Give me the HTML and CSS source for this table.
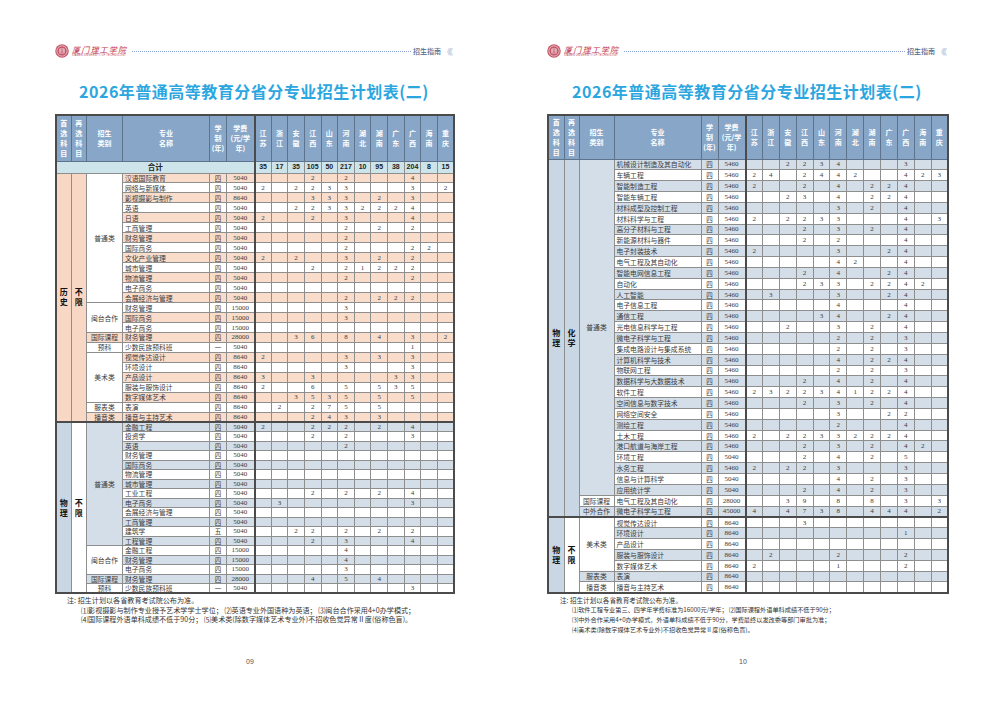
FILE: index.html
```html
<!DOCTYPE html>
<html lang="zh-CN">
<head>
<meta charset="utf-8">
<title>2026年普通高等教育分省分专业招生计划表(二)</title>
<link rel="stylesheet" href="styles.css">
</head>
<body>
<div class="spread">
  <section class="page page-l">
    <div class="inner inner-l">
      <header class="top">
        <div class="logo">
          <svg class="seal" width="14" height="14" viewBox="0 0 30 30"><circle cx="15" cy="15" r="14.5" fill="#c45a6c"/><circle cx="15" cy="15" r="11" fill="none" stroke="#fbe9ec" stroke-width="1.3"/><rect x="9.5" y="9.5" width="11" height="11" rx="1" fill="#f6dde1"/><path d="M11 12.5h8M11 15.5h8M11 18.5h8M15 10.5v9" stroke="#b8475b" stroke-width="1.2"/></svg>
          <div class="brand"><span class="brand-cn">厦门理工学院</span><span class="brand-en">XIAMEN UNIVERSITY OF TECHNOLOGY</span></div>
        </div>
        <div class="dots"></div>
        <span class="guide">招生指南</span><span class="chev">《《</span>
      </header>
      <h1 class="title">2026年普通高等教育分省分专业招生计划表(二)</h1>
      <table class="plan plan-l" id="tl">
        <colgroup><col style="width:15px"><col style="width:15.5px"><col style="width:36px"><col style="width:87px"><col style="width:17px"><col style="width:28px"><col span="12" style="width:16.625px"></colgroup>
        <thead>
          <tr class="hd">
            <th>首<br>选<br>科<br>目</th><th>再<br>选<br>科<br>目</th><th>招生<br>类别</th><th>专业<br>名称</th><th>学<br>制<br>(年)</th><th class="fee">学费<br>(元/学<br>年)</th>
            <th>江<br>苏</th><th>浙<br>江</th><th>安<br>徽</th><th>江<br>西</th><th>山<br>东</th><th>河<br>南</th><th>湖<br>北</th><th>湖<br>南</th><th>广<br>东</th><th>广<br>西</th><th>海<br>南</th><th>重<br>庆</th>
          </tr>
        </thead>
        <tbody>
          <tr class="sum"><td colspan="6" class="fee">合计</td><td>35</td><td>17</td><td>35</td><td>105</td><td>50</td><td>217</td><td>10</td><td>95</td><td>38</td><td>204</td><td>8</td><td>15</td></tr>
        </tbody>
      </table>
      <div class="notes notes-l">
        <p class="lead">注: 招生计划以各省教育考试院公布为准。</p>
        <p>⑴影视摄影与制作专业授予艺术学学士学位； ⑵英语专业外国语种为英语； ⑶闽台合作采用4+0办学模式；</p>
        <p>⑷国际课程外语单科成绩不低于90分； ⑸美术类(除数字媒体艺术专业外)不招收色觉异常Ⅱ度(俗称色盲)。</p>
      </div>
      <div class="pno">09</div>
    </div>
  </section>
  <section class="page page-r">
    <div class="inner inner-r">
      <header class="top">
        <div class="logo">
          <svg class="seal" width="14" height="14" viewBox="0 0 30 30"><circle cx="15" cy="15" r="14.5" fill="#c45a6c"/><circle cx="15" cy="15" r="11" fill="none" stroke="#fbe9ec" stroke-width="1.3"/><rect x="9.5" y="9.5" width="11" height="11" rx="1" fill="#f6dde1"/><path d="M11 12.5h8M11 15.5h8M11 18.5h8M15 10.5v9" stroke="#b8475b" stroke-width="1.2"/></svg>
          <div class="brand"><span class="brand-cn">厦门理工学院</span><span class="brand-en">XIAMEN UNIVERSITY OF TECHNOLOGY</span></div>
        </div>
        <div class="dots"></div>
        <span class="guide">招生指南</span><span class="chev">《《</span>
      </header>
      <h1 class="title">2026年普通高等教育分省分专业招生计划表(二)</h1>
      <table class="plan plan-r" id="tr">
        <colgroup><col style="width:16px"><col style="width:15px"><col style="width:35px"><col style="width:87px"><col style="width:17px"><col style="width:27.5px"><col span="12" style="width:16.875px"></colgroup>
        <thead>
          <tr class="hd">
            <th>首<br>选<br>科<br>目</th><th>再<br>选<br>科<br>目</th><th>招生<br>类别</th><th>专业<br>名称</th><th>学<br>制<br>(年)</th><th class="fee">学费<br>(元/学<br>年)</th>
            <th>江<br>苏</th><th>浙<br>江</th><th>安<br>徽</th><th>江<br>西</th><th>山<br>东</th><th>河<br>南</th><th>湖<br>北</th><th>湖<br>南</th><th>广<br>东</th><th>广<br>西</th><th>海<br>南</th><th>重<br>庆</th>
          </tr>
        </thead>
        <tbody></tbody>
      </table>
      <div class="notes notes-r">
        <p class="lead">注: 招生计划以各省教育考试院公布为准。</p>
        <p>⑴软件工程专业第三、四学年学费标准为16000元/学年； ⑵国际课程外语单科成绩不低于90分；</p>
        <p>⑶中外合作采用4+0办学模式，外语单科成绩不低于90分，学费最终以发改委等部门审批为准；</p>
        <p>⑷美术类(除数字媒体艺术专业外)不招收色觉异常Ⅱ度(俗称色盲)。</p>
      </div>
      <div class="pno">10</div>
    </div>
  </section>
</div>
<script src="app.js"></script>
</body>
</html>
```

FILE: styles.css
```css
* { box-sizing: border-box; }
html, body { margin: 0; padding: 0; background: #ffffff; }
body { font-family: "Noto Sans CJK SC", "Noto Sans", sans-serif; color: #333; }

.spread { display: flex; width: 1000px; height: 710px; overflow: hidden; }
.page { width: 500px; height: 710px; display: flex; }
.page-l { padding-left: 55px; }
.page-r { padding-left: 47px; }
.inner { display: flex; flex-direction: column; height: 710px; padding-top: 42px; }
.inner-l { width: 398px; }
.inner-r { width: 400px; }

/* header strip */
.top { display: flex; align-items: center; height: 18px; }
.logo { display: flex; align-items: center; gap: 3px; }
.seal { display: block; }
.brand { display: flex; flex-direction: column; align-items: flex-start; }
.brand-cn { font-size: 8px; line-height: 9px; color: #c0384f; letter-spacing: 1.2px; font-style: italic; font-weight: 400; }
.brand-en { font-size: 2.6px; line-height: 3px; color: #b83a51; letter-spacing: 0.15px; font-family: "Liberation Sans", sans-serif; }
.dots { flex: 1; border-top: 1px dotted #8ea8d8; margin: 1px 2px 0 5px; }
.guide { font-size: 7px; color: #556789; font-weight: 500; }
.chev { font-size: 8px; color: #a3b3d3; letter-spacing: -2px; margin-left: 2px; margin-right: 2px; }

.title { margin: 21px 0 0; text-align: center; font-size: 16px; line-height: 20px; color: #2ca6df; font-weight: 700; letter-spacing: 0.5px; }

/* table */
.plan { margin-top: 13px; border-collapse: collapse; table-layout: fixed; border: 2px solid #4b4b4b; font-family: "Liberation Serif", "Noto Sans CJK SC", serif; font-size: 7px; color: #3a3a3a; }
.plan-l { width: 398px; }
.plan-r { width: 400px; }
.plan th { background: #88a7c8; color: #fff; font-family: "Noto Sans CJK SC", sans-serif; font-weight: 700; font-size: 7px; line-height: 10px; border: 1px solid #5d738c; padding: 0; text-align: center; vertical-align: middle; }
.plan-l .hd { height: 46px; }
.plan-r .hd { height: 44px; }
.plan td { border: 1px solid #8e8e8e; padding: 0; text-align: center; vertical-align: middle; line-height: 8px; white-space: nowrap; overflow: hidden; }
.plan .fee { border-right: 2px solid #4b4b4b; }
.plan .nm { text-align: left; padding-left: 2px; font-family: "Noto Sans CJK SC", sans-serif; font-size: 6.8px; }
.plan .yr { font-family: "Noto Sans CJK SC", sans-serif; font-size: 6.5px; }
.plan .cat { font-family: "Noto Sans CJK SC", sans-serif; font-size: 6.8px; }

.sum { height: 12px; background: #cde5ea; font-weight: 700; font-family: "Liberation Sans", sans-serif; }
.sum td { font-size: 7px; color: #222; }
.sum .fee { font-family: "Noto Sans CJK SC", sans-serif; font-size: 7.5px; }

.plan-l tr.p { height: 9.97px; }
.plan-l tr.b { height: 9.5px; }
.plan-r tr.b { height: 10.85px; }

tr.p.on { background: #fadccb; }
tr.b.on { background: #d3dee9; }
tr.first td { border-top: 2px solid #4b4b4b; }

.plan td.subj { white-space: normal; font-family: "Noto Sans CJK SC", sans-serif; font-weight: 700; font-size: 8px; line-height: 10px; color: #111; }
.subj .ch { display: block; }
.sp { background: #f8d8c5; }
.sb { background: #c9d6e4; }
.sw { background: #ffffff; }
.cw { background: #ffffff; }
.cb { background: #d3dee9; }

/* notes */
.notes { margin-top: 2px; line-height: 9.6px; color: #333; }
.notes p { margin: 0; white-space: nowrap; }
.notes-l { font-size: 7.1px; }
.notes-l p { padding-left: 26px; }
.notes-l .lead { padding-left: 12px; }
.notes-r { font-size: 6.2px; }
.notes-r p { padding-left: 25px; }
.notes-r .lead { padding-left: 13px; font-size: 6.6px; }

.pno { margin-top: auto; padding-bottom: 45px; text-align: center; font-size: 7px; color: #555; font-family: "Liberation Sans", sans-serif; padding-right: 8px; }
```

FILE: app.js
```js
(function () {
  var LEFT = [
    { c: 'p', s1: '历史', s2: '不限', k1: 'sp', k2: 'sp', start: 0, groups: [
      ['普通类', 'cw', [
        '汉语国际教育|四|5040|,,,2,,2,,,,4,,',
        '网络与新媒体|四|5040|2,,2,2,3,3,,,,3,,2',
        '影视摄影与制作|四|8640|,,,3,3,3,,2,,3,,',
        '英语|四|5040|,,2,2,3,3,2,2,2,4,,',
        '日语|四|5040|2,,,2,,3,,,,4,,',
        '工商管理|四|5040|,,,,,2,,2,,2,,',
        '财务管理|四|5040|,,,,,2,,,,,,',
        '国际商务|四|5040|,,,,,2,,,,2,2,',
        '文化产业管理|四|5040|2,,2,,,3,,2,,2,,',
        '城市管理|四|5040|,,,2,,2,1,2,2,2,,',
        '物流管理|四|5040|,,,,,2,,,,2,,',
        '电子商务|四|5040|,,,,,,,,,,,',
        '会展经济与管理|四|5040|,,,,,2,,2,2,2,,'
      ]],
      ['闽台合作', 'cw', [
        '财务管理|四|15000|,,,,,3,,,,,,',
        '国际商务|四|15000|,,,,,3,,,,,,',
        '电子商务|四|15000|,,,,,,,,,,,'
      ]],
      ['国际课程', '', ['财务管理|四|28000|,,3,6,,8,,4,,3,,2']],
      ['预科', '', ['少数民族预科班|一|5040|,,,,,,,,,1,,']],
      ['美术类', 'cw', [
        '视觉传达设计|四|8640|2,,,,,3,,3,,3,,',
        '环境设计|四|8640|,,,,,3,,,,3,,',
        '产品设计|四|8640|3,,,3,,,,,3,3,,',
        '服装与服饰设计|四|8640|2,,,6,,5,,5,3,5,,',
        '数字媒体艺术|四|8640|,,3,5,3,5,,5,,5,,'
      ]],
      ['服表类', '', ['表演|四|8640|,2,,2,7,5,,5,,,,']],
      ['播音类', '', ['播音与主持艺术|四|8640|,,,2,4,3,,3,,,,']]
    ]},
    { c: 'b', s1: '物理', s2: '不限', k1: 'sb', k2: 'sw', start: 0, groups: [
      ['普通类', 'cb', [
        '金融工程|四|5040|2,,,2,2,2,,2,,4,,',
        '投资学|四|5040|,,,2,,2,,,,3,,',
        '英语|四|5040|,,,,,2,,,,,,',
        '财务管理|四|5040|,,,,,,,,,,,',
        '国际商务|四|5040|,,,,,,,,,,,',
        '物流管理|四|5040|,,,,,,,,,,,',
        '城市管理|四|5040|,,,,,,,,,,,',
        '工业工程|四|5040|,,,2,,2,,2,,4,,',
        '电子商务|四|5040|,3,,,,,,,,3,,',
        '会展经济与管理|四|5040|,,,,,,,,,,,',
        '工商管理|四|5040|,,,,,,,,,,,',
        '建筑学|五|5040|,,2,2,,2,,2,,2,,',
        '工程管理|四|5040|,,,2,,3,,,,4,,'
      ]],
      ['闽台合作', 'cw', [
        '金融工程|四|15000|,,,,,4,,,,,,',
        '财务管理|四|15000|,,,,,4,,,,,,',
        '电子商务|四|15000|,,,,,3,,,,,,'
      ]],
      ['国际课程', '', ['财务管理|四|28000|,,,4,,5,,4,,,,']],
      ['预科', '', ['少数民族预科班|一|5040|,,,,,,,,,3,,']]
    ]}
  ];

  var RIGHT = [
    { c: 'b', s1: '物理', s2: '化学', k1: 'sb', k2: 'sb', start: 0, groups: [
      ['普通类', 'cb', [
        '机械设计制造及其自动化|四|5460|,,2,2,3,4,,,,3,,',
        '车辆工程|四|5460|2,4,,2,4,4,2,,,4,2,3',
        '智能制造工程|四|5460|2,,,2,,4,,2,2,4,,',
        '智能车辆工程|四|5460|,,2,3,,4,,2,2,4,,',
        '材料成型及控制工程|四|5460|,,,,,3,,2,,4,,',
        '材料科学与工程|四|5460|2,,2,2,3,3,,,,4,,3',
        '高分子材料与工程|四|5460|,,,2,,3,,2,,4,,',
        '新能源材料与器件|四|5460|,,,2,,2,,,,4,,',
        '电子封装技术|四|5460|2,,,,,3,,,2,4,,',
        '电气工程及其自动化|四|5460|,,,,,4,2,,,4,,',
        '智能电网信息工程|四|5460|,,,2,,4,,,2,4,,',
        '自动化|四|5460|,,,2,3,3,,2,2,4,2,',
        '人工智能|四|5460|,3,,,,3,,,2,4,,',
        '电子信息工程|四|5460|,,,,,4,,,,4,,',
        '通信工程|四|5460|,,,,3,4,,,2,4,,',
        '光电信息科学与工程|四|5460|,,2,,,3,,2,,4,,',
        '微电子科学与工程|四|5460|,,,,,2,,2,,3,,',
        '集成电路设计与集成系统|四|5460|,,,,,2,,2,,3,,',
        '计算机科学与技术|四|5460|,,,,,4,,2,2,4,,',
        '物联网工程|四|5460|,,,,,2,,2,,3,,',
        '数据科学与大数据技术|四|5460|,,,2,,4,,2,,4,,',
        '软件工程|四|5460|2,3,2,2,3,4,1,2,2,4,,',
        '空间信息与数字技术|四|5460|,,,2,,3,,2,,4,,',
        '网络空间安全|四|5460|,,,,,3,,,2,2,,',
        '测绘工程|四|5460|,,,,,2,,,,4,,',
        '土木工程|四|5460|2,,2,2,3,3,2,2,2,4,,',
        '港口航道与海岸工程|四|5460|,,,2,,3,,2,,4,2,',
        '环境工程|四|5040|,,,2,,4,,2,,5,,',
        '水务工程|四|5460|2,,2,2,,3,,,,3,,',
        '信息与计算科学|四|5040|,,,,,4,,2,,3,,',
        '应用统计学|四|5040|,,,2,,4,,2,,3,,'
      ]],
      ['国际课程', '', ['电气工程及其自动化|四|28000|,,3,9,,8,,8,,3,,3']],
      ['中外合作', '', ['微电子科学与工程|四|45000|4,,4,7,3,8,,4,4,4,,2']]
    ]},
    { c: 'b', s1: '物理', s2: '不限', k1: 'sb', k2: 'sw', start: 1, groups: [
      ['美术类', 'cw', [
        '视觉传达设计|四|8640|,,,3,,,,,,,,',
        '环境设计|四|8640|,,,,,,,,,1,,',
        '产品设计|四|8640|,,,,,,,,,,,',
        '服装与服饰设计|四|8640|,2,,,,2,,,,2,,',
        '数字媒体艺术|四|8640|2,,,,,1,,,,2,,'
      ]],
      ['服表类', '', ['表演|四|8640|,,,,,,,,,,,']],
      ['播音类', '', ['播音与主持艺术|四|8640|,,,,,,,,,,,']]
    ]}
  ];

  function stack(s) {
    return s.split('').map(function (c) { return '<span class="ch">' + c + '</span>'; }).join('');
  }

  function build(id, sections) {
    var tb = document.querySelector('#' + id + ' tbody');
    sections.forEach(function (sec, si) {
      var total = 0;
      sec.groups.forEach(function (g) { total += g[2].length; });
      var idx = 0;
      sec.groups.forEach(function (g) {
        g[2].forEach(function (r, ri) {
          var tr = document.createElement('tr');
          var on = ((idx + sec.start) % 2 === 0);
          tr.className = sec.c + (on ? ' on' : '') + (idx === 0 && si > 0 ? ' first' : '');
          var h = '';
          if (idx === 0) {
            h += '<td class="subj ' + sec.k1 + '" rowspan="' + total + '">' + stack(sec.s1) + '</td>';
            h += '<td class="subj ' + sec.k2 + '" rowspan="' + total + '">' + stack(sec.s2) + '</td>';
          }
          if (ri === 0) {
            var cc = g[2].length > 1 ? (g[1] || 'cw') : '';
            h += '<td class="cat ' + cc + '" rowspan="' + g[2].length + '">' + g[0] + '</td>';
          }
          var p = r.split('|');
          h += '<td class="nm">' + p[0] + '</td><td class="yr">' + p[1] + '</td><td class="fee">' + p[2] + '</td>';
          p[3].split(',').forEach(function (v) { h += '<td>' + v + '</td>'; });
          tr.innerHTML = h;
          tb.appendChild(tr);
          idx++;
        });
      });
    });
  }

  build('tl', LEFT);
  build('tr', RIGHT);
})();
```
